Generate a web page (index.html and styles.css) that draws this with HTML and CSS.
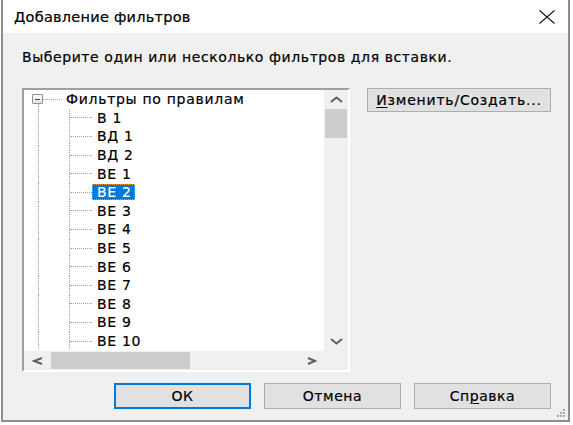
FILE: index.html
```html
<!DOCTYPE html>
<html lang="ru">
<head>
<meta charset="utf-8">
<title>Добавление фильтров</title>
<link rel="stylesheet" href="styles.css">
</head>
<body>
<div class="window">
  <header class="titlebar">
    <span class="title">Добавление фильтров</span>
    <svg class="close" width="16" height="14" viewBox="0 0 16 14" aria-hidden="true">
      <path d="M0.5 0.5 L15.5 13.5 M15.5 0.5 L0.5 13.5" stroke="#1a1a1a" stroke-width="1.2" fill="none"/>
    </svg>
  </header>

  <div class="content">
    <p class="prompt">Выберите один или несколько фильтров для вставки.</p>

    <div class="main">
      <div class="treebox">
        <ul class="tree">
          <li class="node root"><span class="expander"></span><span class="branch"></span><span class="label">Фильтры по правилам</span></li>
          <li class="node child"><span class="branch"></span><span class="label">В 1</span></li>
          <li class="node child"><span class="branch"></span><span class="label">ВД 1</span></li>
          <li class="node child"><span class="branch"></span><span class="label">ВД 2</span></li>
          <li class="node child"><span class="branch"></span><span class="label">ВЕ 1</span></li>
          <li class="node child"><span class="branch"></span><span class="label selected">ВЕ 2</span></li>
          <li class="node child"><span class="branch"></span><span class="label">ВЕ 3</span></li>
          <li class="node child"><span class="branch"></span><span class="label">ВЕ 4</span></li>
          <li class="node child"><span class="branch"></span><span class="label">ВЕ 5</span></li>
          <li class="node child"><span class="branch"></span><span class="label">ВЕ 6</span></li>
          <li class="node child"><span class="branch"></span><span class="label">ВЕ 7</span></li>
          <li class="node child"><span class="branch"></span><span class="label">ВЕ 8</span></li>
          <li class="node child"><span class="branch"></span><span class="label">ВЕ 9</span></li>
          <li class="node child"><span class="branch"></span><span class="label">ВЕ 10</span></li>
        </ul>

        <div class="vscroll">
          <span class="arrow-cell up">
            <svg width="13" height="7" viewBox="0 0 13 7"><path d="M1 6 L6.5 1.5 L12 6" stroke="#606060" stroke-width="2" fill="none"/></svg>
          </span>
          <span class="vthumb"></span>
          <span class="vtrack"></span>
          <span class="arrow-cell down">
            <svg width="13" height="7" viewBox="0 0 13 7"><path d="M1 1 L6.5 5.5 L12 1" stroke="#606060" stroke-width="2" fill="none"/></svg>
          </span>
        </div>

        <div class="hscroll">
          <span class="arrow-cell left">
            <svg width="11" height="8" viewBox="0 0 11 8"><path d="M10 1 L2 4 L10 7" stroke="#606060" stroke-width="2" fill="none"/></svg>
          </span>
          <span class="hthumb"></span>
          <span class="htrack"></span>
          <span class="arrow-cell right">
            <svg width="10" height="8" viewBox="0 0 10 8"><path d="M1 1 L8 4 L1 7" stroke="#606060" stroke-width="2" fill="none"/></svg>
          </span>
        </div>

        <div class="corner"></div>
      </div>

      <div class="side">
        <button class="btn wide"><u>И</u>зменить/Создать...</button>
      </div>
    </div>

    <div class="footer">
      <button class="btn default">ОК</button>
      <button class="btn">Отмена</button>
      <button class="btn">Сп<u>р</u>авка</button>
    </div>
  </div>

  <svg class="grip" width="9" height="9" viewBox="0 0 9 9" aria-hidden="true">
    <g fill="#a8a8a8">
      <rect x="6" y="0" width="2" height="2"/>
      <rect x="3" y="3" width="2" height="2"/><rect x="6" y="3" width="2" height="2"/>
      <rect x="0" y="6" width="2" height="2"/><rect x="3" y="6" width="2" height="2"/><rect x="6" y="6" width="2" height="2"/>
    </g>
  </svg>
</div>
</body>
</html>
```

FILE: styles.css
```css
html, body {
  margin: 0;
  padding: 0;
  background: #ffffff;
}

body {
  font-family: "DejaVu Sans", "Noto Sans", sans-serif;
  font-size: 14px;
  color: #000;
  -webkit-text-stroke: 0.2px currentColor;
}

/* dialog frame */
.window {
  position: relative;
  box-sizing: border-box;
  margin-left: 1px;
  width: 569px;
  height: 422px;
  background: #f0f0f0;
  border-left: 2px solid #8e8e8e;
  border-right: 2px solid #8e8e8e;
  border-bottom: 2px solid #8e8e8e;
  display: flex;
  flex-direction: column;
}

.titlebar {
  height: 33px;
  flex: none;
  background: #ffffff;
  display: flex;
  align-items: center;
  justify-content: space-between;
  padding: 0 13px 0 11px;
}

.title {
  font-size: 14.5px;
  letter-spacing: 0.25px;
}

.close {
  display: block;
  margin-top: 1px;
  -webkit-text-stroke: 0;
}

.content {
  padding: 14px 14px 0 19px;
  display: flex;
  flex-direction: column;
}

.prompt {
  margin: 0;
  height: 20px;
  line-height: 20px;
  letter-spacing: 0.58px;
}

.main {
  margin-top: 21px;
  display: flex;
  gap: 17px;
  align-items: flex-start;
}

/* sunken tree view with scrollbars */
.treebox {
  box-sizing: border-box;
  width: 328px;
  height: 284px;
  border-style: solid;
  border-width: 2px;
  border-color: #a0a0a0 #ffffff #ffffff #a0a0a0;
  box-shadow: inset 1px 1px 0 #696969;
  display: grid;
  grid-template-columns: 300px 24px;
  grid-template-rows: 261px 19px;
  background: #f0f0f0;
}

.tree {
  margin: 0;
  padding: 0;
  list-style: none;
  background: #ffffff;
  overflow: hidden;
  grid-column: 1;
  grid-row: 1;
}

.node {
  height: 18.6px;
  display: flex;
  align-items: center;
  white-space: nowrap;
  background-repeat: no-repeat;
  letter-spacing: 0.7px;
}

.root {
  background-image: repeating-linear-gradient(to bottom, #a0a0a0 0 1px, transparent 1px 2px);
  background-size: 1px 45%;
  background-position: 14px 100%;
}

.child {
  padding-left: 46px;
  background-image:
    repeating-linear-gradient(to bottom, #a0a0a0 0 1px, transparent 1px 2px),
    repeating-linear-gradient(to bottom, #a0a0a0 0 1px, transparent 1px 2px);
  background-size: 1px 100%, 1px 100%;
  background-position: 14px 0, 45px 0;
}

.expander {
  box-sizing: border-box;
  margin-left: 8px;
  width: 11px;
  height: 10px;
  border: 1px solid #919191;
  border-radius: 1px;
  background: linear-gradient(#fdfdfd, #e4e4e4);
  display: flex;
  align-items: center;
  justify-content: center;
}

.expander::after {
  content: "";
  width: 5px;
  height: 1px;
  background: #2b4a84;
}

.branch {
  height: 0;
  border-top: 1px dotted #a0a0a0;
}

.root .branch {
  width: 19px;
}

.child .branch {
  width: 22px;
}

.label {
  padding: 0 3px 0 4px;
  line-height: 16px;
}

.child .label {
  padding-left: 5px;
}

.label.selected {
  background: #0078d7;
  color: #ffffff;
  outline: 1px dotted #f0a040;
  outline-offset: -1px;
}

/* vertical scrollbar */
.vscroll {
  grid-column: 2;
  grid-row: 1;
  display: flex;
  flex-direction: column;
  background: #f0f0f0;
}

.arrow-cell {
  display: flex;
  align-items: center;
  justify-content: center;
  flex: none;
}

.arrow-cell svg {
  display: block;
}

.vscroll .up {
  height: 19px;
}

.vthumb {
  height: 29px;
  margin: 0 1px;
  background: #cdcdcd;
}

.vtrack {
  flex: 1;
}

.vscroll .down {
  height: 19px;
}

/* horizontal scrollbar */
.hscroll {
  grid-column: 1;
  grid-row: 2;
  display: flex;
  background: #f0f0f0;
}

.hscroll .left {
  width: 27px;
}

.hthumb {
  width: 139px;
  margin: 1px 0;
  background: #cdcdcd;
}

.htrack {
  flex: 1;
}

.hscroll .right {
  width: 25px;
}

.corner {
  grid-column: 2;
  grid-row: 2;
  background: #f0f0f0;
}

/* push buttons */
.btn {
  box-sizing: border-box;
  font-family: inherit;
  font-size: 14px;
  color: #000;
  -webkit-text-stroke: 0.2px currentColor;
  background: #e1e1e1;
  border: 1px solid #adadad;
  border-radius: 0;
  padding: 0;
  margin: 0;
  width: 137px;
  height: 26px;
  letter-spacing: 0.55px;
}

.btn u {
  text-decoration-thickness: 1px;
  text-underline-offset: 2px;
}

.btn.wide {
  width: 184px;
  height: 24px;
  letter-spacing: 0.8px;
}

.btn.default {
  border: 2px solid #0078d7;
}

.footer {
  margin-top: 11px;
  display: flex;
  justify-content: flex-end;
  gap: 13px;
  padding-right: 3px;
}

.grip {
  position: absolute;
  right: 2px;
  bottom: 2px;
}
```
